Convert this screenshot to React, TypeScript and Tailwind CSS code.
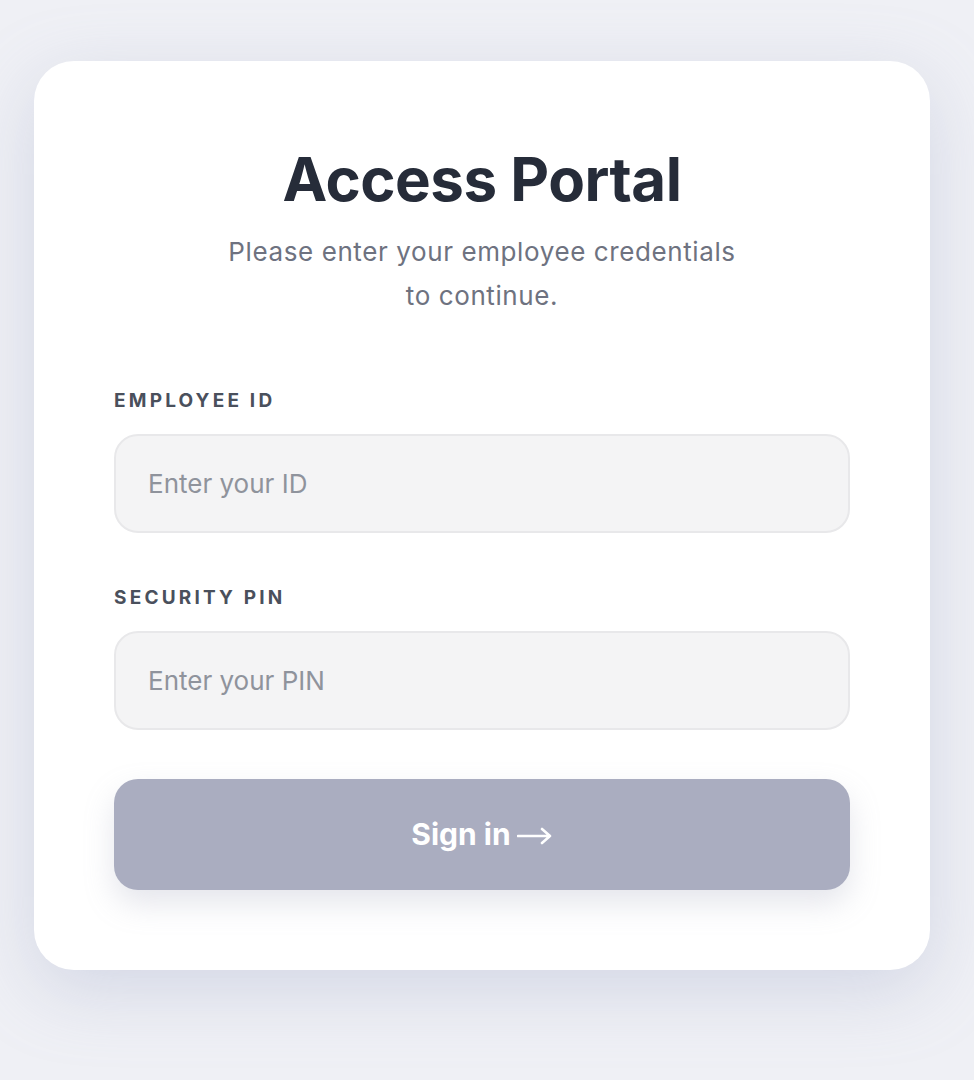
export default function App() {
  return (
    <div className="min-h-screen bg-[#eff0f5] pt-[61px] pl-[34px] font-['Inter','Liberation_Sans',sans-serif]">
      <div className="w-[896px] rounded-[40px] bg-white px-20 pt-[80px] pb-20 shadow-[0_20px_70px_rgba(160,170,200,0.35)]">
        {/* heading */}
        <div className="text-center">
          <h1 className="text-[60px] leading-[76px] font-bold tracking-[-0.5px] text-[#262c39]">
            Access Portal
          </h1>
          <p className="mx-auto mt-[13px] max-w-[520px] text-[26px] leading-[44px] tracking-[0.6px] text-[#6e7280]">
            Please enter your employee credentials to continue.
          </p>
        </div>

        <form className="mt-[69px] flex flex-col" onSubmit={(e) => e.preventDefault()}>
          <label className="text-[19px] font-bold tracking-[3.2px] text-[#4a505c]">EMPLOYEE ID</label>
          <input
            type="text"
            placeholder="Enter your ID"
            className="mt-[18px] h-[99px] rounded-[24px] border-2 border-[#e8e8ea] bg-[#f4f4f5] px-[32px] text-[26px] text-[#262c39] placeholder:text-[#8f939c] outline-none"
          />

          <label className="mt-[51px] text-[19px] font-bold tracking-[3.2px] text-[#4a505c]">SECURITY PIN</label>
          <input
            type="password"
            placeholder="Enter your PIN"
            className="mt-[19px] h-[99px] rounded-[24px] border-2 border-[#e8e8ea] bg-[#f4f4f5] px-[32px] text-[26px] text-[#262c39] placeholder:text-[#8f939c] outline-none"
          />

          <button
            type="submit"
            className="mt-[49px] flex h-[111px] items-center justify-center gap-[6px] rounded-[24px] bg-[#aaadc0] text-[30px] font-bold text-white shadow-[0_14px_30px_rgba(150,155,180,0.25)]"
          >
            <span>Sign in</span>
            <svg width="36" height="18" viewBox="0 0 36 18" fill="none" className="mt-[3px]">
              <path d="M1 9h32M25 2l8 7-8 7" stroke="white" strokeWidth="2.6" strokeLinecap="round" strokeLinejoin="round" />
            </svg>
          </button>
        </form>
      </div>
    </div>
  );
}
